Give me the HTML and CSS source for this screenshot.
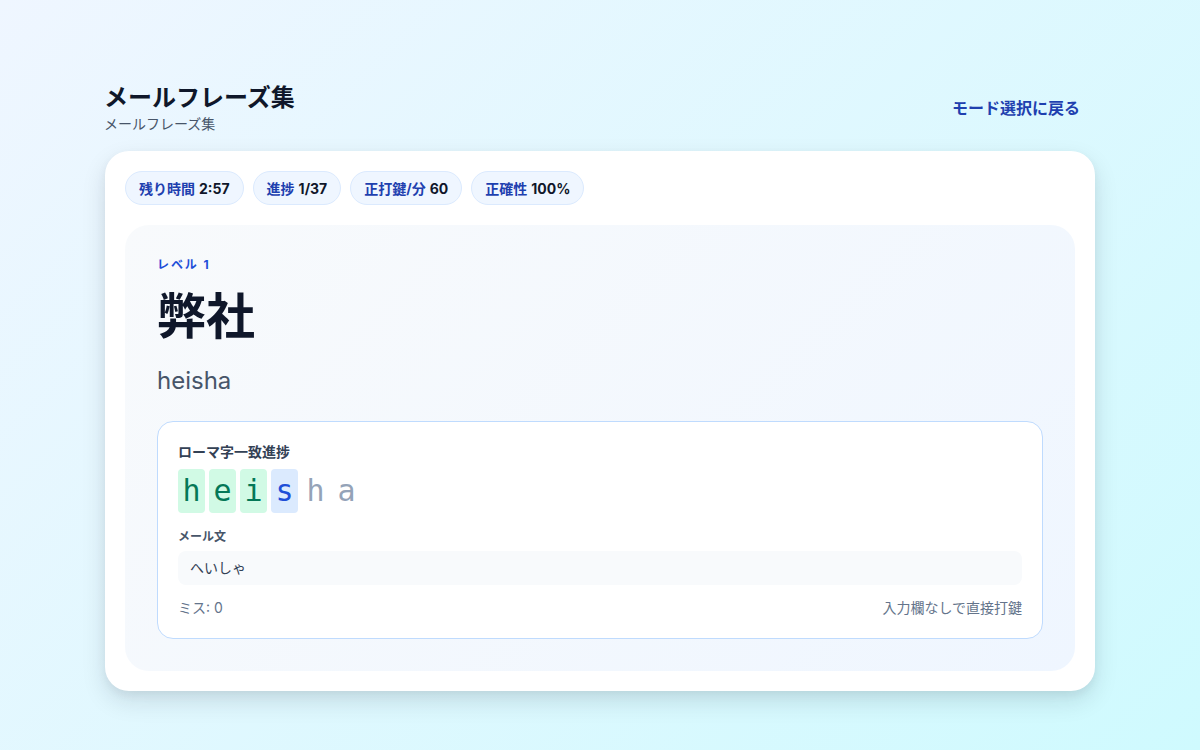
FILE: index.html
```html
<!DOCTYPE html>
<html lang="ja">
<head>
<meta charset="utf-8">
<link rel="stylesheet" href="styles.css">
</head>
<body>
<div class="page">
  <header class="header">
    <div>
      <h1 class="title">メールフレーズ集</h1>
      <p class="subtitle">メールフレーズ集</p>
    </div>
    <a class="back">モード選択に戻る</a>
  </header>
  <main class="card">
    <div class="pills">
      <span class="pill"><b>残り時間</b> 2:57</span>
      <span class="pill"><b>進捗</b> 1/37</span>
      <span class="pill"><b>正打鍵/分</b> 60</span>
      <span class="pill"><b>正確性</b> 100%</span>
    </div>
    <section class="panel">
      <div class="level">レベル 1</div>
      <div class="word">弊社</div>
      <div class="reading">heisha</div>
      <div class="box">
        <div class="box-label">ローマ字一致進捗</div>
        <div class="chars">
          <span class="ch done">h</span><span class="ch done">e</span><span class="ch done">i</span><span class="ch cur">s</span><span class="ch rest">h</span><span class="ch rest">a</span>
        </div>
        <div class="mail-label">メール文</div>
        <div class="mail">へいしゃ</div>
        <div class="foot">
          <span>ミス: 0</span>
          <span>入力欄なしで直接打鍵</span>
        </div>
      </div>
    </section>
  </main>
</div>
</body>
</html>
```
FILE: styles.css
```css
* { box-sizing: border-box; }
html, body { margin: 0; height: 100%; }
body {
  font-family: Inter, "Noto Sans CJK JP", sans-serif;
  background: linear-gradient(135deg, #eff6ff 0%, #cffafe 100%);
  color: #0f172a;
  min-height: 750px;
}
.page {
  width: 990px;
  margin: 0 auto;
  padding-top: 82px;
}
.header {
  display: flex;
  justify-content: space-between;
  align-items: center;
  margin-bottom: 17px;
}
.title {
  margin: 0 0 0 -1px;
  font-size: 24px;
  line-height: 32px;
  font-weight: 700;
  color: #0f172a;
}
.subtitle {
  margin: 0 0 0 -1px;
  font-size: 14px;
  line-height: 20px;
  color: #475569;
}
.back {
  font-size: 16px;
  font-weight: 700;
  color: #1e40af;
  padding: 8px 15px;
  margin-bottom: 2px;
}
.card {
  background: #fff;
  border-radius: 24px;
  padding: 20px;
  box-shadow: 0 10px 25px rgba(15, 23, 42, 0.12), 0 4px 10px rgba(15, 23, 42, 0.05);
}
.pills {
  display: flex;
  gap: 9px;
  margin-bottom: 20px;
}
.pill {
  height: 34px;
  display: inline-flex;
  align-items: center;
  gap: 4px;
  padding: 0 13px;
  border-radius: 999px;
  background: #eff6ff;
  border: 1px solid #dbeafe;
  font-size: 14px;
  font-weight: 700;
  color: #0f172a;
}
.pill b { color: #1e40af; font-weight: 700; }
.panel {
  border-radius: 24px;
  background: linear-gradient(135deg, #f8fafc 0%, #eff6ff 100%);
  padding: 32px;
}
.level {
  font-size: 12px;
  line-height: 16px;
  font-weight: 700;
  letter-spacing: 0.16em;
  color: #1d4ed8;
}
.word {
  margin-top: 8px;
  font-size: 49px;
  line-height: 72px;
  font-weight: 700;
  color: #0f172a;
}
.reading {
  margin-top: 12px;
  font-size: 24px;
  line-height: 32px;
  font-weight: 400;
  color: #475569;
}
.box {
  margin-top: 24px;
  background: #fff;
  border: 1px solid #bfdbfe;
  border-radius: 16px;
  padding: 20px;
}
.box-label {
  font-size: 14px;
  line-height: 20px;
  font-weight: 700;
  color: #334155;
}
.chars {
  display: flex;
  gap: 4px;
  margin-top: 7px;
}
.ch {
  font-family: "DejaVu Sans Mono", monospace;
  font-size: 30px;
  line-height: 44px;
  height: 44px;
  width: 27px;
  text-align: center;
  border-radius: 4px;
}
.done { background: #d1fae5; color: #047857; }
.cur { background: #dbeafe; color: #1d4ed8; }
.rest { color: #94a3b8; }
.mail-label {
  margin-top: 16px;
  font-size: 12px;
  line-height: 16px;
  font-weight: 700;
  color: #475569;
}
.mail {
  margin-top: 6px;
  background: #f8fafc;
  border-radius: 8px;
  padding: 7px 12px;
  font-size: 14px;
  line-height: 20px;
  color: #334155;
}
.foot {
  display: flex;
  justify-content: space-between;
  margin-top: 13px;
  font-size: 14px;
  line-height: 20px;
  color: #64748b;
}
```
